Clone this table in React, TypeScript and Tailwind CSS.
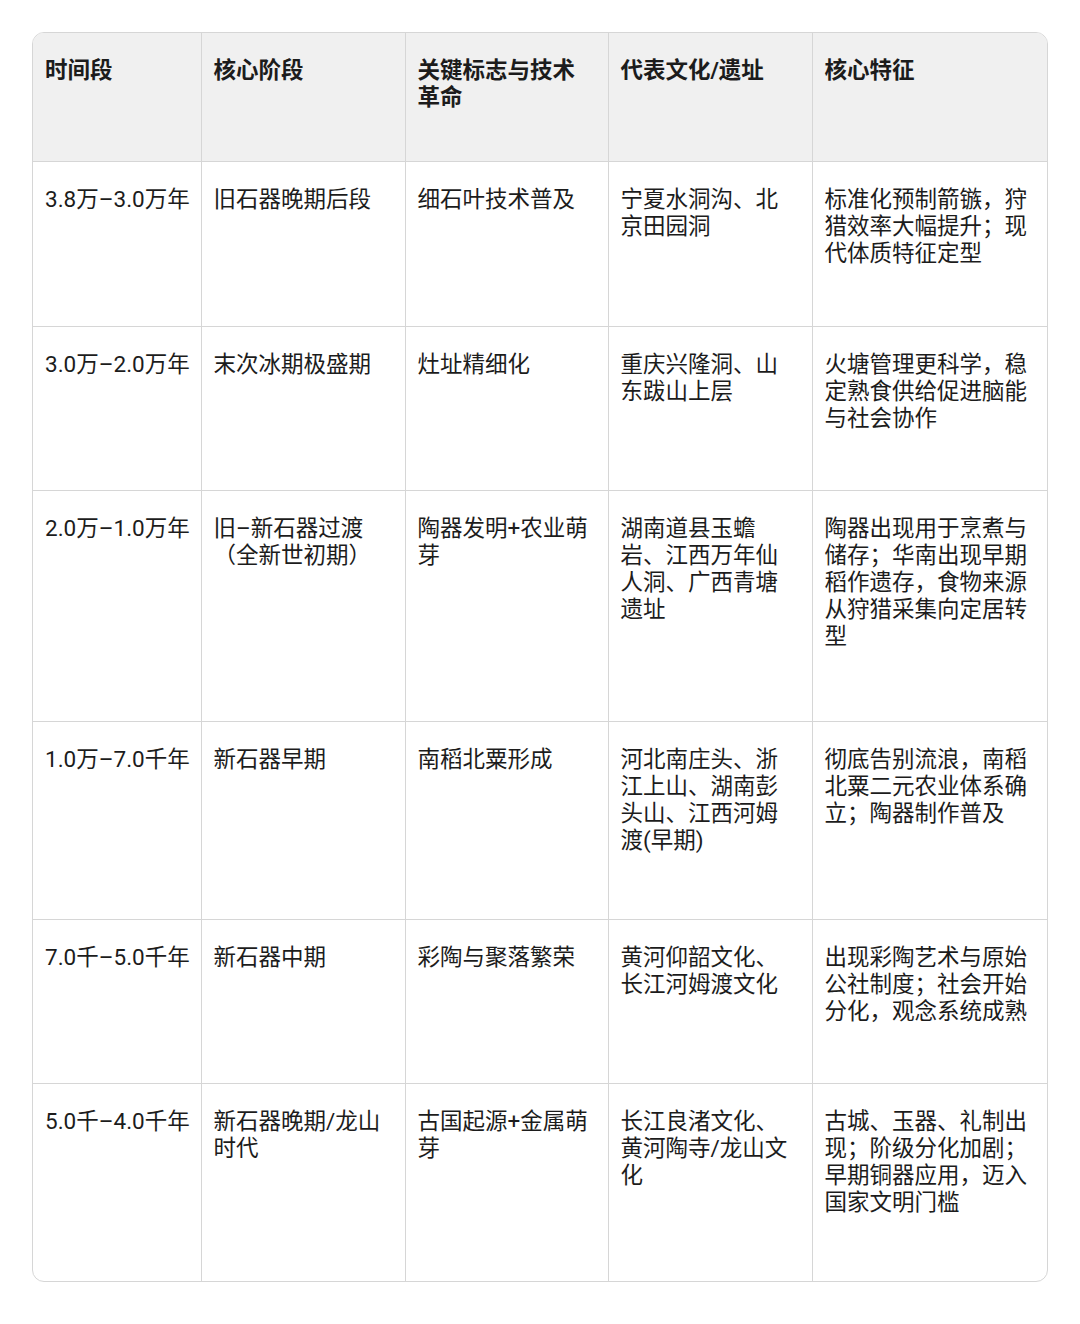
const headers = ['时间段', '核心阶段', '关键标志与技术革命', '代表文化/遗址', '核心特征']

const rows: { h: string; cells: string[] }[] = [
  {
    h: 'h-[165px]',
    cells: ['3.8万–3.0万年', '旧石器晚期后段', '细石叶技术普及', '宁夏水洞沟、北京田园洞', '标准化预制箭镞，狩猎效率大幅提升；现代体质特征定型'],
  },
  {
    h: 'h-[164px]',
    cells: ['3.0万–2.0万年', '末次冰期极盛期', '灶址精细化', '重庆兴隆洞、山东跋山上层', '火塘管理更科学，稳定熟食供给促进脑能与社会协作'],
  },
  {
    h: 'h-[231px]',
    cells: ['2.0万–1.0万年', '旧–新石器过渡（全新世初期）', '陶器发明+农业萌芽', '湖南道县玉蟾岩、江西万年仙人洞、广西青塘遗址', '陶器出现用于烹煮与储存；华南出现早期稻作遗存，食物来源从狩猎采集向定居转型'],
  },
  {
    h: 'h-[198px]',
    cells: ['1.0万–7.0千年', '新石器早期', '南稻北粟形成', '河北南庄头、浙江上山、湖南彭头山、江西河姆渡(早期)', '彻底告别流浪，南稻北粟二元农业体系确立；陶器制作普及'],
  },
  {
    h: 'h-[164px]',
    cells: ['7.0千–5.0千年', '新石器中期', '彩陶与聚落繁荣', '黄河仰韶文化、长江河姆渡文化', '出现彩陶艺术与原始公社制度；社会开始分化，观念系统成熟'],
  },
  {
    h: 'h-[198px]',
    cells: ['5.0千–4.0千年', '新石器晚期/龙山时代', '古国起源+金属萌芽', '长江良渚文化、黄河陶寺/龙山文化', '古城、玉器、礼制出现；阶级分化加剧；早期铜器应用，迈入国家文明门槛'],
  },
]

const widths = ['w-[168px]', 'w-[204px]', 'w-[203px]', 'w-[204px]', 'w-[235px]']

export default function App() {
  return (
    <div className="min-h-[1324px] bg-white pt-[32px] pl-[32px] font-['Roboto','Noto_Sans_CJK_SC',sans-serif] text-[#1c1c1c]">
      <div className="w-[1016px] overflow-hidden rounded-[12px] border border-[#d6d6d6]">
        <table className="w-full table-fixed border-collapse">
          <colgroup>
            {widths.map((w, i) => (
              <col key={i} className={w} />
            ))}
          </colgroup>
          <thead>
            <tr className="h-[128px] bg-[#f0f0f0]">
              {headers.map((t, i) => (
                <th
                  key={i}
                  className={`pl-3 pr-4 pt-[24px] text-left align-top text-[22.5px] font-bold leading-[27px] ${i > 0 ? 'border-l border-[#d6d6d6]' : ''}`}
                >
                  {t}
                </th>
              ))}
            </tr>
          </thead>
          <tbody>
            {rows.map((r, ri) => (
              <tr key={ri} className={`${r.h} border-t border-[#d6d6d6]`}>
                {r.cells.map((c, ci) => (
                  <td
                    key={ci}
                    className={`pl-3 pt-[24px] align-top text-[22.5px] leading-[27px] ${ci > 0 ? 'border-l border-[#d6d6d6] pr-4' : 'whitespace-nowrap pr-0'}`}
                  >
                    {c}
                  </td>
                ))}
              </tr>
            ))}
          </tbody>
        </table>
      </div>
    </div>
  )
}
